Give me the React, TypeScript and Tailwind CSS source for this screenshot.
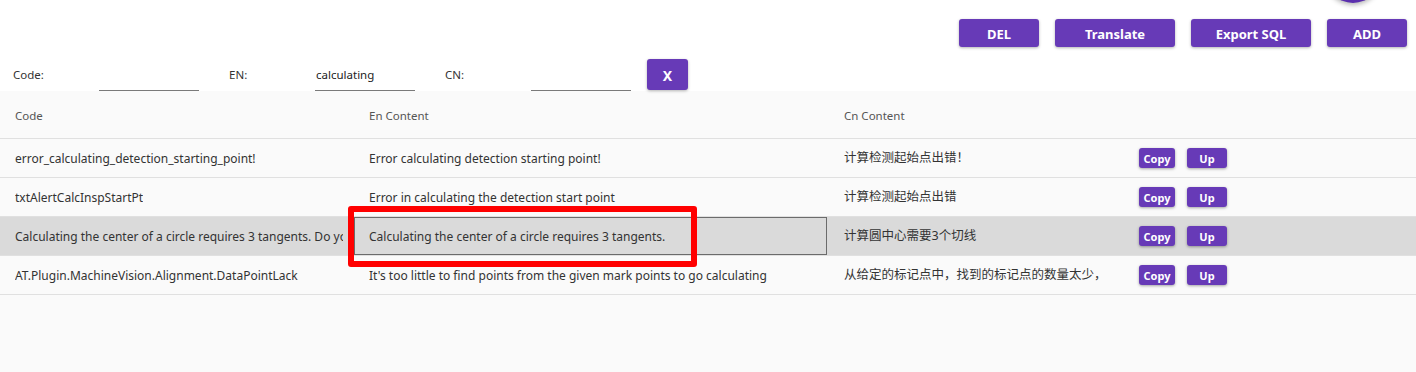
const ROWS = [
  {
    code: 'error_calculating_detection_starting_point!',
    en: 'Error calculating detection starting point!',
    cn: '计算检测起始点出错！',
  },
  {
    code: 'txtAlertCalcInspStartPt',
    en: 'Error in calculating the detection start point',
    cn: '计算检测起始点出错',
  },
  {
    code: 'Calculating the center of a circle requires 3 tangents. Do you want to continue?',
    en: 'Calculating the center of a circle requires 3 tangents.',
    cn: '计算圆中心需要3个切线',
    selected: true,
  },
  {
    code: 'AT.Plugin.MachineVision.Alignment.DataPointLack',
    en: "It's too little to find points from the given mark points to go calculating",
    cn: '从给定的标记点中，找到的标记点的数量太少，',
  },
]

const TOP_BUTTONS = [
  { label: 'DEL', w: 'w-[80px]' },
  { label: 'Translate', w: 'w-[120px]' },
  { label: 'Export SQL', w: 'w-[120px]' },
  { label: 'ADD', w: 'w-[80px]' },
]

function Filter({ label, value, first }: { label: string; value: string; first?: boolean }) {
  return (
    <div className={`flex ${first ? '' : 'ml-[30px]'}`}>
      <div className="w-[86px] flex items-center text-[11.5px] text-[#333]">{label}</div>
      <div className="w-[100px] flex items-center border-b border-[#7a7a7a] text-[11.5px] text-[#222] pl-px">
        {value}
      </div>
    </div>
  )
}

function SmallBtn({ label, w }: { label: string; w: string }) {
  return (
    <button
      className={`${w} h-[20px] pt-px rounded-[3px] bg-[#673ab7] text-white text-[11px] font-bold leading-none shadow-[0_1px_3px_rgba(0,0,0,0.35)]`}
    >
      {label}
    </button>
  )
}

export default function App() {
  return (
    <div className="relative w-[1416px] h-[372px] overflow-hidden bg-white font-['Noto_Sans','Noto_Sans_CJK_SC',sans-serif]">
      {/* fab peeking from above */}
      <div className="flex justify-end items-end h-[3px] pr-[35px]">
        <div className="w-14 h-14 shrink-0 rounded-full bg-[#5b2fae] shadow-[0_2px_5px_rgba(0,0,0,0.3)]" />
      </div>

      <div className="flex justify-end gap-4 pr-[9px] mt-[16px]">
        {TOP_BUTTONS.map((b) => (
          <button
            key={b.label}
            className={`${b.w} h-[28px] pt-[3px] rounded-[3px] bg-[#673ab7] text-white text-[13px] font-bold leading-none shadow-[0_1px_3px_rgba(0,0,0,0.3)]`}
          >
            {b.label}
          </button>
        ))}
      </div>

      <div className="flex h-[32px] pl-[13px] mt-[12px]">
        <Filter label="Code:" value="" first />
        <Filter label="EN:" value="calculating" />
        <Filter label="CN:" value="" />
        <button className="ml-4 w-[41px] h-[31px] pt-px rounded-[3px] bg-[#673ab7] text-white text-[14px] font-bold shadow-[0_1px_3px_rgba(0,0,0,0.3)]">
          X
        </button>
      </div>

      <div className="bg-[#fafafa] h-full text-[12px] text-[#333]">
        <div className="grid grid-cols-[354px_475px_295px_1fr] h-[48px] items-center border-b border-[#e0e0e0] text-[11.5px] text-[#555] pt-[2px]">
          <div className="pl-[15px]">Code</div>
          <div className="pl-[15px]">En Content</div>
          <div className="pl-[15px]">Cn Content</div>
          <div />
        </div>
        {ROWS.map((r) => (
          <div
            key={r.code}
            className={`grid grid-cols-[354px_475px_295px_1fr] h-[39px] border-b border-[#e0e0e0] ${r.selected ? 'bg-[#dadada]' : ''}`}
          >
            <div className="pl-[15px] pr-[11px] pt-px flex items-center overflow-hidden whitespace-nowrap">
              <span className="overflow-hidden">{r.code}</span>
            </div>
            <div
              className={`pl-[14px] pt-px flex items-center whitespace-nowrap ${r.selected ? 'border border-[#6b6b6b] mr-[2px]' : 'border border-transparent'}`}
            >
              {r.en}
            </div>
            <div className="pl-[15px] pt-px flex items-center whitespace-nowrap text-[12.5px]">{r.cn}</div>
            <div className="pl-[15px] flex items-center gap-3">
              <SmallBtn label="Copy" w="w-[36px]" />
              <SmallBtn label="Up" w="w-[40px]" />
            </div>
          </div>
        ))}
      </div>

      {/* annotation frame */}
      <div className="absolute left-[348px] top-[206px] w-[349px] h-[61px] border-[6px] border-[#ff0000] rounded-[3px]" />
    </div>
  )
}
